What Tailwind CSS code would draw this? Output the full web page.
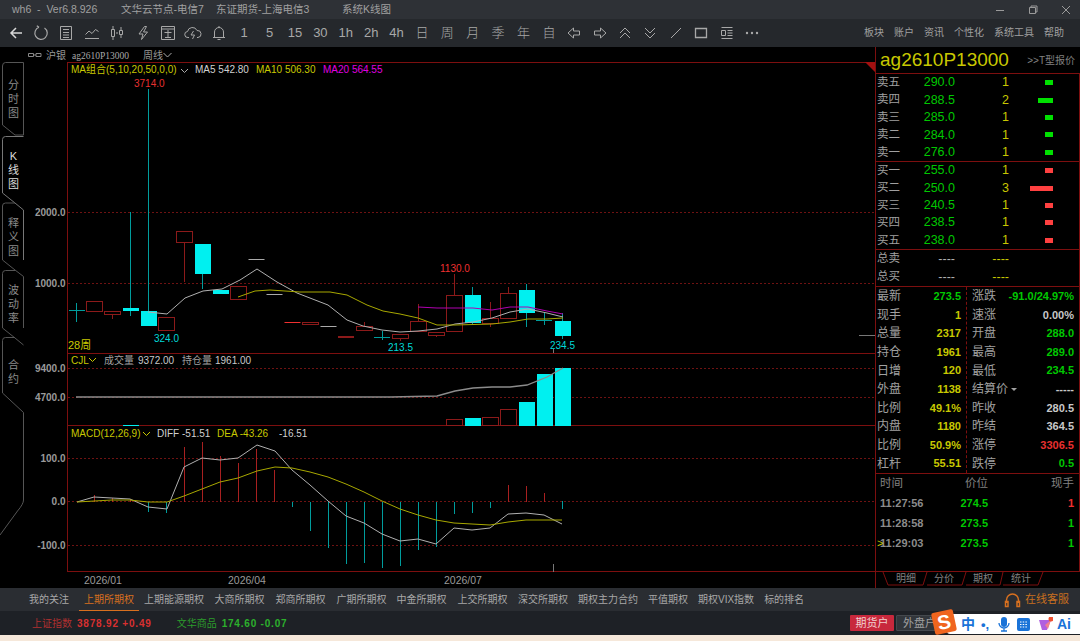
<!DOCTYPE html>
<html lang="zh">
<head>
<meta charset="UTF-8">
<title>系统K线图</title>
<script src="https://cdn.jsdelivr.net/npm/@tailwindcss/browser@4"></script>
</head>
<body class="relative w-[1080px] h-[641px] overflow-hidden flex flex-col bg-black font-['Liberation_Sans','Noto_Sans_CJK_SC',sans-serif] text-[11px]">

<!-- title bar -->
<div class="h-[19px] flex items-center bg-[#2e3136] text-[#a0a0a0] text-[10.5px] pl-[12px]">
  <span class="w-[109px]">wh6&nbsp; -&nbsp; Ver6.8.926</span>
  <span class="w-[95px]">文华云节点-电信7</span>
  <span class="w-[126px]">东证期货-上海电信3</span>
  <span>系统K线图</span>
  <div class="ml-auto flex items-center gap-[23px] pr-[9px] text-[#9a9a9a]">
    <svg width="10" height="10" fill="none" stroke="currentColor"><path d="M1 5.5h8"/></svg>
    <svg width="10" height="10" fill="none" stroke="currentColor"><path d="M1.5 2.5h6v6h-6zM3 2.5v-1.500h6v6h-1"/></svg>
    <svg width="10" height="10" fill="none" stroke="currentColor"><path d="M1 1l8 8M9 1l-8 8"/></svg>
  </div>
</div>

<!-- toolbar -->
<div class="h-[28px] flex items-center bg-[#25282c] text-[#a8a8a8] pl-[3px] text-[13px] font-light">
  <div class="w-[25.4px] flex justify-center text-[#d8d8d8]"><svg width="16" height="16" fill="none" stroke="currentColor" stroke-width="1.500"><path d="M14 8H3M8 3 3 8l5 5"/></svg></div>
  <div class="w-[25.4px] flex justify-center"><svg width="16" height="16" fill="none" stroke="currentColor" stroke-width="1.200"><path d="M6 2.300A6.200 6.200 0 1 0 11.500 3M6 2.300 3.800 .8"/></svg></div>
  <div class="w-[25.4px] flex justify-center"><svg width="16" height="16" fill="none" stroke="currentColor"><path d="M2.500 1.500h11v13h-11zM5 4.500h6M5 7.500h6M5 10h6M5 12.500h6"/></svg></div>
  <div class="w-[25.4px] flex justify-center"><svg width="16" height="16" fill="none" stroke="currentColor"><path d="M1.500 9.500 5 6l3 2.500 3.500-4 3 2M1 13.500h14"/></svg></div>
  <div class="w-[25.4px] flex justify-center"><svg width="16" height="16" fill="none" stroke="currentColor"><path d="M2.500 4.500h3v7h-3zM4 1v3.500M4 11.500V15M10.500 5.500h3v4h-3zM12 2v3.500M12 9.500V13M7 8h2"/></svg></div>
  <div class="w-[25.4px] flex justify-center"><svg width="16" height="16" fill="none" stroke="currentColor"><path d="M9.500 1.500 4 9h4l-1.500 5.500L12.500 7H8.500l3-5.500z"/></svg></div>
  <div class="w-[25.4px] flex justify-center"><svg width="16" height="16" fill="none" stroke="currentColor"><path d="M1.500 1.500h13v13h-13zM1.500 4h13M4.500 7.500h7M8 5v7M5 12.500h6"/></svg></div>
  <div class="w-[25.4px] flex justify-center"><svg width="18" height="16" fill="none" stroke="currentColor"><path d="M5 12.500H4a3 3 0 0 1-.5-6A5 5 0 0 1 13 5.500a3.500 3.500 0 0 1 1 7h-1M9.500 6 7 10h3.500l-2 4"/></svg></div>
  <div class="w-[25.4px] flex justify-center"><svg width="16" height="16" fill="none" stroke="currentColor"><path d="M3.500 12.500V7a4.500 4.500 0 0 1 9 0v5.500M2 12.500h12M6.500 14.500h3M8 2.500V1"/></svg></div>
  <span class="w-[25.4px] text-center">1</span>
  <span class="w-[25.4px] text-center">5</span>
  <span class="w-[25.4px] text-center">15</span>
  <span class="w-[25.4px] text-center">30</span>
  <span class="w-[25.4px] text-center">1h</span>
  <span class="w-[25.4px] text-center">2h</span>
  <span class="w-[25.4px] text-center">4h</span>
  <span class="w-[25.4px] text-center">日</span>
  <span class="w-[25.4px] text-center">周</span>
  <span class="w-[25.4px] text-center">月</span>
  <span class="w-[25.4px] text-center">季</span>
  <span class="w-[25.4px] text-center">年</span>
  <span class="w-[25.4px] text-center">自</span>
  <div class="w-[25.4px] flex justify-center"><svg width="16" height="16" fill="none" stroke="currentColor"><path d="M2 8l5.500-5v3H13.500v4H7.500v3z"/></svg></div>
  <div class="w-[25.4px] flex justify-center"><svg width="16" height="16" fill="none" stroke="currentColor"><path d="M14 8 8.500 3v3H2.500v4h6v3z"/></svg></div>
  <div class="w-[25.4px] flex justify-center"><svg width="16" height="16" fill="none" stroke="currentColor"><path d="M3 8l5-5 5 5M3 13l5-5 5 5"/></svg></div>
  <div class="w-[25.4px] flex justify-center"><svg width="16" height="16" fill="none" stroke="currentColor"><path d="M3 3l5 5 5-5M3 8l5 5 5-5"/></svg></div>
  <div class="w-[25.4px] flex justify-center"><svg width="16" height="16" fill="none" stroke="currentColor"><path d="M3 13 13 3"/></svg></div>
  <div class="w-[25.4px] flex justify-center"><svg width="16" height="16" fill="none" stroke="currentColor" stroke-width="1.300"><path d="M2.500 3.500h11v9h-11z"/></svg></div>
  <div class="w-[25.4px] flex justify-center"><svg width="16" height="16" fill="none" stroke="currentColor"><path d="M2.500 2.500h11M2.500 13.500h11M2.500 5.500h4v5h-4zM8.500 5.500h5M8.500 8h5M8.500 10.500h5"/></svg></div>
  <div class="w-[25.4px] flex justify-center"><svg width="16" height="16" fill="currentColor"><circle cx="3" cy="8" r="1.200"/><circle cx="8" cy="8" r="1.200"/><circle cx="13" cy="8" r="1.200"/></svg></div>
  <div class="ml-auto flex gap-[10px] pr-[16px] text-[10px] font-normal -mt-[2px] text-[#a0a0a0]">
    <span>板块</span><span>账户</span><span>资讯</span><span>个性化</span><span>系统工具</span><span>帮助</span>
  </div>
</div>

<!-- main -->
<div class="h-[541px] flex">
  <!-- chart canvas -->
  <svg width="875" height="541" viewBox="0 47 875 541" class="shrink-0 bg-black" font-size="10">
    <!-- side tabs -->
    <g fill="none" stroke="#555" stroke-width="1">
      <path d="M2.500 125V66q0-3.500 3-3.500H23.500V135H15L2.500 125"/>
      <path d="M23.500 136.500H5.500q-3 0-3 3V193L15 203l8.500 7V260" stroke="#777"/>
      <path d="M15 203H5.500q-3 0-3 3v54L15 270l8.500 6.500V328"/>
      <path d="M15 270.500H5.500q-3 0-3 3V328L15 338l8.500 7"/>
      <path d="M15 337.500H5.500q-3 0-3 3V393L23.500 412.500V500q0 4-6 11L0 535"/>
    </g>
    <g fill="#8a8a8a" font-size="11" text-anchor="middle">
      <text x="13.500" y="89">分</text><text x="13.500" y="103">时</text><text x="13.500" y="117">图</text>
      <text x="13.500" y="160" fill="#ddd">K</text><text x="13.500" y="174" fill="#ddd">线</text><text x="13.500" y="188" fill="#ddd">图</text>
      <text x="13.500" y="227">释</text><text x="13.500" y="241">义</text><text x="13.500" y="255">图</text>
      <text x="13.500" y="294">波</text><text x="13.500" y="308">动</text><text x="13.500" y="322">率</text>
      <text x="13.500" y="369">合</text><text x="13.500" y="383">约</text>
    </g>

    <!-- symbol row -->
    <path d="M28.500 53.500h5v3h-5zM36 53.500h5v3h-5zM33 55h3" fill="none" stroke="#888"/>
    <text x="46" y="59" fill="#9a9a9a">沪银</text>
    <text x="72" y="59" fill="#a8a8a8" font-size="9.500" font-family="Liberation Serif">ag2610P13000</text>
    <text x="143" y="59" fill="#9a9a9a">周线</text>
    <path d="M163.500 53l4 4 4-4" fill="none" stroke="#aaa"/>

    <!-- frame -->
    <g stroke="#7d0f0f" fill="none">
      <path d="M67.500 62V572M67 62.500H875M67 353.500H875M67 425.500H875M67 571.500H875"/>
    </g>
    <path d="M865 62h10v10z" fill="#a31010"/>
    <g stroke="#6e1212" stroke-dasharray="2 2" fill="none">
      <path d="M68 212.500H875M68 283.500H875M68 368.500H875M68 397.500H875M68 458.500H875M68 501.500H875M68 545.500H875"/>
    </g>

    <!-- axis -->
    <g fill="#9a9a9a" font-weight="700" text-anchor="end">
      <text x="65.500" y="216">2000.0</text>
      <text x="65.500" y="287">1000.0</text>
      <text x="65.500" y="372">9400.0</text>
      <text x="65.500" y="401">4700.0</text>
      <text x="65.500" y="462">100.0</text>
      <text x="65.500" y="505">0.0</text>
      <text x="65.500" y="549">-100.0</text>
    </g>
    <g fill="#9a9a9a" font-size="10.500">
      <text x="84" y="584">2026/01</text>
      <text x="228" y="584">2026/04</text>
      <text x="444" y="584">2026/07</text>
    </g>

    <!-- legends -->
    <text x="71" y="73" fill="#c8c800">MA组合(5,10,20,50,0,0)</text>
    <path d="M181 69l3.500 3.500 3.500-3.500" fill="none" stroke="#aaa"/>
    <text x="195" y="73" fill="#d0d0d0">MA5 542.80</text>
    <text x="256" y="73" fill="#c8c800">MA10 506.30</text>
    <text x="323" y="73" fill="#e000e0">MA20 564.55</text>
    <text x="134" y="87" fill="#e83030">3714.0</text>
    <text x="154" y="342" fill="#00d8d8">324.0</text>
    <text x="440" y="272" fill="#f03030">1130.0</text>
    <text x="388" y="351" fill="#00d8d8">213.5</text>
    <text x="550" y="349" fill="#00d8d8">234.5</text>
    <text x="68" y="349" fill="#c8c800" font-size="11">28周</text>
    <path d="M859 335.500h16" stroke="#777"/>

    <text x="71" y="364" fill="#c8c800">CJL</text>
    <path d="M89 358l3.500 3.500 3.500-3.500" fill="none" stroke="#c8c800"/>
    <text x="104" y="364" fill="#a0a0a0">成交量</text>
    <text x="138" y="364" fill="#c8c8c8">9372.00</text>
    <text x="182" y="364" fill="#a0a0a0">持仓量</text>
    <text x="215" y="364" fill="#c8c8c8">1961.00</text>

    <text x="71" y="437" fill="#c8c800">MACD(12,26,9)</text>
    <path d="M143 432l3.500 3.500 3.500-3.500" fill="none" stroke="#c8c800"/>
    <text x="157" y="437" fill="#d0d0d0">DIFF -51.51</text>
    <text x="217" y="437" fill="#c8c800">DEA -43.26</text>
    <text x="279" y="437" fill="#d0d0d0">-16.51</text>

    <!-- wicks -->
    <g stroke="#009c9c" fill="none">
      <path d="M76.500 303v19M130.500 212v104M148.500 89v237M202.500 273v16M382.500 331v9M472.500 287v38M526.500 284v43M544.500 312v13M562.500 313v26"/>
      <path d="M69 310.500h16M374 337.500h16M536 320.500h16"/>
    </g>
    <g stroke="#8c1a1a" fill="none">
      <path d="M112.500 314v5M184.500 242v40M238.500 299v1M364.500 322v4M400.500 338v3M418.500 304v17M436.500 335v2M454.500 274v21M490.500 302v16M490.500 323v4M508.500 287v6"/>
    </g>
    <path d="M553.500 349v4" stroke="#777"/>

    <!-- cyan candles -->
    <g fill="#00f0f0">
      <rect x="123" y="308" width="16" height="3"/>
      <rect x="141" y="311" width="16" height="15"/>
      <rect x="195" y="244" width="16" height="30"/>
      <rect x="213" y="290" width="16" height="4"/>
      <rect x="465" y="295" width="16" height="28"/>
      <rect x="519" y="290" width="16" height="23"/>
      <rect x="555" y="321" width="16" height="15"/>
    </g>
    <!-- red candles -->
    <g stroke="#8c1a1a" fill="none">
      <rect x="86.500" y="301.500" width="16" height="10"/>
      <rect x="104.500" y="311.500" width="16" height="3"/>
      <rect x="158.500" y="317.500" width="16" height="13"/>
      <rect x="176.500" y="231.500" width="16" height="11"/>
      <rect x="230.500" y="286.500" width="16" height="13"/>
      <rect x="302.500" y="322.500" width="16" height="2"/>
      <rect x="356.500" y="326.500" width="16" height="4"/>
      <rect x="392.500" y="334.500" width="16" height="4"/>
      <rect x="410.500" y="321.500" width="16" height="10"/>
      <rect x="428.500" y="332.500" width="16" height="3"/>
      <rect x="446.500" y="295.500" width="16" height="36"/>
      <rect x="482.500" y="318.500" width="16" height="5"/>
      <rect x="500.500" y="293.500" width="16" height="25"/>
    </g>
    <rect x="338" y="336" width="16" height="2" fill="#8c1a1a"/>
    <path d="M284.500 322.500h16" stroke="#f03030"/>
    <path d="M248.500 259.500h16M266.500 294.500h16M320.500 326.500h16" stroke="#aaa"/>

    <!-- moving averages -->
    <g fill="none">
      <polyline stroke="#b0b0b0" points="148,312 167,314 185,298 203,291 222,289 240,280 257,269 277,282 297,293 328,305 347,320 363,326 382,330 400,332 418,331 437,329 455,324 473,322 492,318 510,312 528,309 547,313 563,317"/>
      <polyline stroke="#a8a800" points="238,297 255,291 270,290 300,292 330,292 347,295 367,305 383,311 400,314 418,318 437,325 455,325 492,324 510,322 528,319 547,319 563,318"/>
      <polyline stroke="#b000b0" points="418,307 437,308 473,308 492,310 510,307 528,307 547,311 563,314"/>
    </g>

    <!-- volume -->
    <g fill="#00f0f0">
      <rect x="465" y="418" width="16" height="8"/>
      <rect x="519" y="402" width="16" height="24"/>
      <rect x="537" y="374" width="16" height="52"/>
      <rect x="555" y="368" width="16" height="58"/>
      <rect x="123" y="425" width="16" height="1"/>
    </g>
    <g stroke="#8c1a1a" fill="none">
      <rect x="446.500" y="419.500" width="16" height="6"/>
      <rect x="482.500" y="417.500" width="16" height="8"/>
      <rect x="500.500" y="409.500" width="16" height="16"/>
    </g>
    <polyline fill="none" stroke="#8c8c8c" stroke-width="1.300" points="76,397 391,397 437,396 455,391 473,388 492,387 510,387 527,385 547,377 563,368"/>

    <!-- macd -->
    <g stroke="#a82020" fill="none">
      <path d="M94.500 495v7M112.500 498v4M130.500 499v3M184.500 447v55M202.500 442v60M220.500 456v46M238.500 463v39M256.500 449v53M274.500 470v32M508.500 485v17M526.500 486v16M544.500 493v9"/>
    </g>
    <g stroke="#009c9c" fill="none">
      <path d="M148.500 502v10M166.500 502v11M292.500 502v5M310.500 502v29M328.500 502v46M346.500 502v62M364.500 502v61M382.500 502v66M400.500 502v64M418.500 502v48M436.500 502v45M454.500 502v12M472.500 502v11M490.500 502v6M562.500 501v8"/>
    </g>
    <path d="M553.500 564v8" stroke="#777"/>
    <polyline fill="none" stroke="#b0b0b0" points="77,502 94,497 112,498 130,499 148,507 167,509 184,467 202,458 220,460 238,458 257,445 275,451 292,470 310,485 328,501 346,516 364,523 382,534 400,541 418,539 436,544 454,528 472,530 490,528 508,514 526,513 544,515 562,524"/>
    <polyline fill="none" stroke="#a8a800" points="77,502 112,500 130,500 148,502 167,502 184,496 202,489 220,482 238,478 257,471 275,467 292,468 310,472 328,477 346,484 364,492 382,501 400,509 418,515 436,520 454,523 472,524 490,525 508,522 526,520 544,520 562,520"/>
  </svg>

  <!-- right panel -->
  <div class="w-[205px] flex flex-col border-l border-[#7d0f0f] text-[#a0a0a0]">
    <div class="h-[26px] flex items-center justify-between pl-[4px] pr-[5px]">
      <span class="text-[19px] text-[#c8c800]">ag2610P13000</span>
      <span class="text-[10px] text-[#808080]">&gt;&gt;T型报价</span>
    </div>
    <div class="flex-1 flex flex-col border-t border-r border-[#7d0f0f]">
      <!-- order book -->
      <div class="pl-[1px] border-b border-[#7d0f0f] text-[12.5px]">
        <div class="h-[17.4px] flex items-center"><span class="w-[24px] text-[11.5px]">卖五</span><span class="w-[54px] text-right text-[#00c800]">290.0</span><span class="w-[54px] text-right text-[#c8c800]">1</span><span class="w-[44px] flex justify-end"><i class="w-[8px] h-[5px] bg-[#00e000]"></i></span></div>
        <div class="h-[17.4px] flex items-center"><span class="w-[24px] text-[11.5px]">卖四</span><span class="w-[54px] text-right text-[#00c800]">288.5</span><span class="w-[54px] text-right text-[#c8c800]">2</span><span class="w-[44px] flex justify-end"><i class="w-[15px] h-[5px] bg-[#00e000]"></i></span></div>
        <div class="h-[17.4px] flex items-center"><span class="w-[24px] text-[11.5px]">卖三</span><span class="w-[54px] text-right text-[#00c800]">285.0</span><span class="w-[54px] text-right text-[#c8c800]">1</span><span class="w-[44px] flex justify-end"><i class="w-[8px] h-[5px] bg-[#00e000]"></i></span></div>
        <div class="h-[17.4px] flex items-center"><span class="w-[24px] text-[11.5px]">卖二</span><span class="w-[54px] text-right text-[#00c800]">284.0</span><span class="w-[54px] text-right text-[#c8c800]">1</span><span class="w-[44px] flex justify-end"><i class="w-[8px] h-[5px] bg-[#00e000]"></i></span></div>
        <div class="h-[17.4px] flex items-center"><span class="w-[24px] text-[11.5px]">卖一</span><span class="w-[54px] text-right text-[#00c800]">276.0</span><span class="w-[54px] text-right text-[#c8c800]">1</span><span class="w-[44px] flex justify-end"><i class="w-[8px] h-[5px] bg-[#00e000]"></i></span></div>
      </div>
      <div class="pl-[1px] border-b border-[#7d0f0f] text-[12.5px]">
        <div class="h-[17.4px] flex items-center"><span class="w-[24px] text-[11.5px]">买一</span><span class="w-[54px] text-right text-[#00c800]">255.0</span><span class="w-[54px] text-right text-[#c8c800]">1</span><span class="w-[44px] flex justify-end"><i class="w-[8px] h-[5px] bg-[#ff4040]"></i></span></div>
        <div class="h-[17.4px] flex items-center"><span class="w-[24px] text-[11.5px]">买二</span><span class="w-[54px] text-right text-[#00c800]">250.0</span><span class="w-[54px] text-right text-[#c8c800]">3</span><span class="w-[44px] flex justify-end"><i class="w-[23px] h-[5px] bg-[#ff4040]"></i></span></div>
        <div class="h-[17.4px] flex items-center"><span class="w-[24px] text-[11.5px]">买三</span><span class="w-[54px] text-right text-[#00c800]">240.5</span><span class="w-[54px] text-right text-[#c8c800]">1</span><span class="w-[44px] flex justify-end"><i class="w-[8px] h-[5px] bg-[#ff4040]"></i></span></div>
        <div class="h-[17.4px] flex items-center"><span class="w-[24px] text-[11.5px]">买四</span><span class="w-[54px] text-right text-[#00c800]">238.5</span><span class="w-[54px] text-right text-[#c8c800]">1</span><span class="w-[44px] flex justify-end"><i class="w-[8px] h-[5px] bg-[#ff4040]"></i></span></div>
        <div class="h-[17.4px] flex items-center"><span class="w-[24px] text-[11.5px]">买五</span><span class="w-[54px] text-right text-[#00c800]">238.0</span><span class="w-[54px] text-right text-[#c8c800]">1</span><span class="w-[44px] flex justify-end"><i class="w-[8px] h-[5px] bg-[#ff4040]"></i></span></div>
      </div>
      <div class="pl-[1px] border-b border-[#7d0f0f] text-[12.5px]">
        <div class="h-[18px] flex items-center"><span class="w-[24px] text-[11.5px]">总卖</span><span class="w-[54px] text-right text-[#b0b0b0]">----</span><span class="w-[54px] text-right text-[#c8c800]">----</span></div>
        <div class="h-[18px] flex items-center"><span class="w-[24px] text-[11.5px]">总买</span><span class="w-[54px] text-right text-[#b0b0b0]">----</span><span class="w-[54px] text-right text-[#c8c800]">----</span></div>
      </div>
      <!-- stats -->
      <div class="flex border-b border-[#7d0f0f] font-bold text-[11px]">
        <div class="w-[91px] pl-[1px] pr-[5px] border-r border-dashed border-[#7d0f0f]">
          <div class="h-[18.6px] flex items-center justify-between text-[#00c800]"><span class="font-normal text-[12px] text-[#a0a0a0]">最新</span>273.5</div>
          <div class="h-[18.6px] flex items-center justify-between text-[#c8c800]"><span class="font-normal text-[12px] text-[#a0a0a0]">现手</span>1</div>
          <div class="h-[18.6px] flex items-center justify-between text-[#c8c800]"><span class="font-normal text-[12px] text-[#a0a0a0]">总量</span>2317</div>
          <div class="h-[18.6px] flex items-center justify-between text-[#c8c800]"><span class="font-normal text-[12px] text-[#a0a0a0]">持仓</span>1961</div>
          <div class="h-[18.6px] flex items-center justify-between text-[#c8c800]"><span class="font-normal text-[12px] text-[#a0a0a0]">日增</span>120</div>
          <div class="h-[18.6px] flex items-center justify-between text-[#c8c800]"><span class="font-normal text-[12px] text-[#a0a0a0]">外盘</span>1138</div>
          <div class="h-[18.6px] flex items-center justify-between text-[#c8c800]"><span class="font-normal text-[12px] text-[#a0a0a0]">比例</span>49.1%</div>
          <div class="h-[18.6px] flex items-center justify-between text-[#c8c800]"><span class="font-normal text-[12px] text-[#a0a0a0]">内盘</span>1180</div>
          <div class="h-[18.6px] flex items-center justify-between text-[#c8c800]"><span class="font-normal text-[12px] text-[#a0a0a0]">比例</span>50.9%</div>
          <div class="h-[18.6px] flex items-center justify-between text-[#c8c800]"><span class="font-normal text-[12px] text-[#a0a0a0]">杠杆</span>55.51</div>
        </div>
        <div class="flex-1 pl-[5px] pr-[5px]">
          <div class="h-[18.6px] flex items-center justify-between text-[#00c800]"><span class="font-normal text-[12px] text-[#a0a0a0]">涨跌</span>-91.0/24.97%</div>
          <div class="h-[18.6px] flex items-center justify-between text-[#c8c8c8]"><span class="font-normal text-[12px] text-[#a0a0a0]">速涨</span>0.00%</div>
          <div class="h-[18.6px] flex items-center justify-between text-[#00c800]"><span class="font-normal text-[12px] text-[#a0a0a0]">开盘</span>288.0</div>
          <div class="h-[18.6px] flex items-center justify-between text-[#00c800]"><span class="font-normal text-[12px] text-[#a0a0a0]">最高</span>289.0</div>
          <div class="h-[18.6px] flex items-center justify-between text-[#00c800]"><span class="font-normal text-[12px] text-[#a0a0a0]">最低</span>234.5</div>
          <div class="h-[18.6px] flex items-center justify-between text-[#c8c8c8]"><span class="font-normal text-[12px] text-[#a0a0a0] flex items-center gap-[3px]">结算价<i class="border-x-[3px] border-t-[3px] border-x-transparent border-t-[#a0a0a0]"></i></span>-----</div>
          <div class="h-[18.6px] flex items-center justify-between text-[#c8c8c8]"><span class="font-normal text-[12px] text-[#a0a0a0]">昨收</span>280.5</div>
          <div class="h-[18.6px] flex items-center justify-between text-[#c8c8c8]"><span class="font-normal text-[12px] text-[#a0a0a0]">昨结</span>364.5</div>
          <div class="h-[18.6px] flex items-center justify-between text-[#e83030]"><span class="font-normal text-[12px] text-[#a0a0a0]">涨停</span>3306.5</div>
          <div class="h-[18.6px] flex items-center justify-between text-[#00c800]"><span class="font-normal text-[12px] text-[#a0a0a0]">跌停</span>0.5</div>
        </div>
      </div>
      <!-- trades -->
      <div class="flex-1 border-b border-[#7d0f0f] pl-[4px] pr-[5px] font-bold text-[11px]">
        <div class="h-[19px] flex items-center font-normal text-[#808080] text-[11.5px]"><span class="w-[49px]">时间</span><span class="w-[59px] text-right">价位</span><span class="flex-1 text-right">现手</span></div>
        <div class="h-[20px] flex items-center text-[#8c8c8c]"><span class="w-[49px]">11:27:56</span><span class="w-[59px] text-right text-[#00c800]">274.5</span><span class="flex-1 text-right text-[#f03030]">1</span></div>
        <div class="h-[20px] flex items-center text-[#8c8c8c]"><span class="w-[49px]">11:28:58</span><span class="w-[59px] text-right text-[#00c800]">273.5</span><span class="flex-1 text-right text-[#00c800]">1</span></div>
        <div class="relative h-[20px] flex items-center text-[#8c8c8c]"><span class="absolute -left-[3px] text-[#c8c800] font-normal">&gt;</span><span class="w-[49px]">11:29:03</span><span class="w-[59px] text-right text-[#00c800]">273.5</span><span class="flex-1 text-right text-[#00c800]">1</span></div>
      </div>
    </div>
    <svg width="204" height="16" viewBox="876 572 204 16" font-size="10" fill="none">
      <path d="M883 572l5 13h35l4-13M927 585h35l4-13M966 585h34l3-13M1003 585h35l5-13" stroke="#7d0f0f"/>
      <g fill="#808080" stroke="none"><text x="896" y="582">明细</text><text x="934" y="582">分价</text><text x="973" y="582">期权</text><text x="1011" y="582">统计</text></g>
    </svg>
  </div>
</div>

<!-- exchange tabs -->
<div class="h-[23px] flex items-stretch bg-[#2a2d32] text-[10px] text-[#a8a8a8] pl-[24px]">
  <span class="px-[5px] flex items-center">我的关注</span>
  <span class="ml-[5px] mr-[0px] px-[5px] flex items-center text-[#d8701f] border-b border-[#d8701f]">上期所期权</span>
  <span class="ml-[0px] px-[5px] flex items-center">上期能源期权</span>
  <span class="ml-[0.500px] px-[5px] flex items-center">大商所期权</span>
  <span class="ml-[1px] px-[5px] flex items-center">郑商所期权</span>
  <span class="ml-[1px] px-[5px] flex items-center">广期所期权</span>
  <span class="px-[5px] flex items-center">中金所期权</span>
  <span class="ml-[1px] px-[5px] flex items-center">上交所期权</span>
  <span class="ml-[0.500px] px-[5px] flex items-center">深交所期权</span>
  <span class="px-[5px] flex items-center">期权主力合约</span>
  <span class="px-[5px] flex items-center">平值期权</span>
  <span class="px-[5px] flex items-center">期权VIX指数</span>
  <span class="px-[5px] flex items-center">标的排名</span>
  <div class="ml-auto pr-[11px] flex items-center gap-[4px] text-[#c8701f] text-[11px]">
    <svg width="17" height="16" fill="none" stroke="#d8701f" stroke-width="1.500"><path d="M2.500 11V8a6 6 0 0 1 12 0v3M1.500 9.500h2.500v5h-2.500zM13 9.500h2.500v5H13z"/></svg>
    <span>在线客服</span>
  </div>
</div>

<!-- status bar -->
<div class="h-[24px] flex items-center bg-[#1e2126] text-[10px] font-bold pl-[32px]">
  <span class="font-normal text-[#b03030]">上证指数</span>
  <span class="ml-[5px] tracking-[0.8px] text-[#d83030]">3878.92 +0.49</span>
  <span class="ml-[25px] font-normal text-[#2c9c2c]">文华商品</span>
  <span class="ml-[5px] tracking-[0.8px] text-[#2cb02c]">174.60 -0.07</span>
  <div class="ml-auto mr-[140px] flex gap-[2px] font-normal">
    <span class="w-[44px] h-[16px] flex items-center justify-center rounded-[1px] bg-[#c8283c] text-[#f0d0d0] text-[11px]">期货户</span>
    <span class="w-[44px] h-[16px] flex items-center pl-[6px] rounded-[1px] bg-[#32363b] border border-[#44484d] text-[#a0a0a0] text-[11px]">外盘户</span>
  </div>
</div>
<div class="flex-1 bg-[#f6e8da]"></div>

<!-- input method bar over the status bar -->
<div class="absolute left-[947px] top-[614px] w-[133px] h-[20px] bg-white flex items-center rounded-l-[3px] text-[#1a73d8]">
  <span class="ml-[14px] w-[14px] text-[14px] font-bold">中</span>
  <span class="ml-[6px] w-[14px] text-[13px] font-bold leading-none">•,</span>
  <svg class="ml-[2px]" width="14" height="16" fill="#1a73d8"><rect x="4" y="1" width="6" height="10" rx="3"/><path d="M2 7a5 5 0 0 0 10 0M7 12v3M4 15h6" fill="none" stroke="#1a73d8" stroke-width="1.300"/></svg>
  <svg class="ml-[6px]" width="13" height="13"><rect width="13" height="13" rx="2" fill="#1a73d8"/><path d="M3 4h7M3 6.500h7M3 9h7" stroke="#fff" stroke-dasharray="1.500 1.200"/></svg>
  <svg class="ml-[9px]" width="14" height="14"><path d="M0 3h12l-4 10H3z" fill="#b060e0"/><path d="M6 8l6-5-3 9z" fill="#f08090"/><circle cx="12" cy="2" r="2.500" fill="#f05030"/></svg>
  <span class="ml-[4px] text-[14px] font-bold">Ai</span>
</div>
<div class="absolute left-[933px] top-[611px] w-[22px] h-[22px] rotate-[-12deg] rounded-[2px] bg-[#f0651e] flex items-center justify-center text-white text-[20px] font-bold leading-none">S</div>

</body>
</html>
